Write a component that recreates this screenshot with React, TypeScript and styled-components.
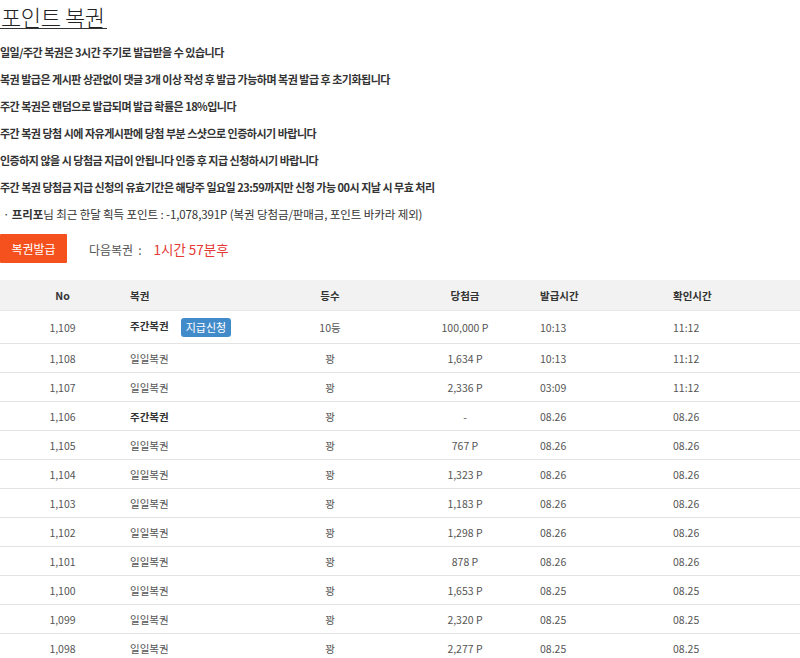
import styled, { createGlobalStyle } from 'styled-components';

const GlobalStyle = createGlobalStyle`
    body {
        margin: 0;
        background: #fff;
        font-family: "Noto Sans CJK KR", "Noto Sans", sans-serif;
        color: #333;
    }
`;

const Page = styled.div`
    width: 800px;
    overflow: hidden;
`;

const Title = styled.h2`
    display: inline-block;
    margin: 0;
    padding: 4px 2px 0 1px;
    font-size: 22px;
    font-weight: 300;
    line-height: 24px;
    letter-spacing: -0.4px;
    color: #222;
    border-bottom: 1px solid #333;
`;

const Notices = styled.ul`
    list-style: none;
    margin: 8px 0 0;
    padding: 0;
`;

const Notice = styled.li<{ $plain?: boolean }>`
    height: 27px;
    line-height: 27px;
    font-size: ${p => (p.$plain ? '11.5px' : '11px')};
    letter-spacing: ${p => (p.$plain ? '-0.1px' : '-0.5px')};
    font-weight: ${p => (p.$plain ? 400 : 700)};
    color: #333;
    white-space: nowrap;
    padding-left: ${p => (p.$plain ? '3px' : '0')};

    b {
        font-weight: 700;
    }
`;

const Actions = styled.div`
    display: flex;
    align-items: center;
    gap: 22px;
    margin-top: 6px;
`;

const IssueButton = styled.button`
    width: 67px;
    height: 29px;
    border: none;
    border-radius: 1px;
    background: #f4511e;
    color: #fff;
    font-family: inherit;
    font-size: 12px;
    padding: 0;
`;

const NextInfo = styled.span`
    font-size: 12px;
    color: #555;
`;

const Colon = styled.span`
    margin: 0 12px 0 5px;
`;

const Countdown = styled.span`
    color: #e53935;
    font-size: 13.5px;
`;

const Table = styled.table`
    width: 800px;
    margin-top: 17px;
    border-collapse: collapse;
    table-layout: fixed;
    font-size: 10.5px;
`;

const Head = styled.th<{ $align?: string; $pad?: number }>`
    height: 30px;
    padding: 0 0 0 ${p => p.$pad ?? 0}px;
    background: #f2f2f2;
    border-bottom: 1px solid #e6e6e6;
    text-align: ${p => p.$align ?? 'center'};
    font-weight: 700;
    color: #333;
`;

const Row = styled.tr<{ $tall?: boolean }>`
    height: ${p => (p.$tall ? 33 : 29)}px;
    border-bottom: 1px solid #e3e3e3;
`;

const Cell = styled.td<{ $align?: string; $pad?: number }>`
    padding: 0 0 0 ${p => p.$pad ?? 0}px;
    text-align: ${p => p.$align ?? 'center'};
    color: #555;
    white-space: nowrap;
`;

const Kind = styled.span<{ $weekly?: boolean }>`
    font-weight: ${p => (p.$weekly ? 700 : 400)};
    color: ${p => (p.$weekly ? '#333' : '#555')};
`;

const ClaimBadge = styled.span`
    display: inline-block;
    margin-left: 12px;
    padding: 0 5px;
    height: 19px;
    line-height: 19px;
    border-radius: 3px;
    background: #428bca;
    color: #fff;
    font-size: 11px;
    vertical-align: middle;
`;

interface Ticket {
    no: string;
    weekly: boolean;
    claim?: boolean;
    rank: string;
    prize: string;
    issued: string;
    checked: string;
}

const tickets: Ticket[] = [
    { no: '1,109', weekly: true, claim: true, rank: '10등', prize: '100,000 P', issued: '10:13', checked: '11:12' },
    { no: '1,108', weekly: false, rank: '꽝', prize: '1,634 P', issued: '10:13', checked: '11:12' },
    { no: '1,107', weekly: false, rank: '꽝', prize: '2,336 P', issued: '03:09', checked: '11:12' },
    { no: '1,106', weekly: true, rank: '꽝', prize: '-', issued: '08.26', checked: '08.26' },
    { no: '1,105', weekly: false, rank: '꽝', prize: '767 P', issued: '08.26', checked: '08.26' },
    { no: '1,104', weekly: false, rank: '꽝', prize: '1,323 P', issued: '08.26', checked: '08.26' },
    { no: '1,103', weekly: false, rank: '꽝', prize: '1,183 P', issued: '08.26', checked: '08.26' },
    { no: '1,102', weekly: false, rank: '꽝', prize: '1,298 P', issued: '08.26', checked: '08.26' },
    { no: '1,101', weekly: false, rank: '꽝', prize: '878 P', issued: '08.26', checked: '08.26' },
    { no: '1,100', weekly: false, rank: '꽝', prize: '1,653 P', issued: '08.25', checked: '08.25' },
    { no: '1,099', weekly: false, rank: '꽝', prize: '2,320 P', issued: '08.25', checked: '08.25' },
    { no: '1,098', weekly: false, rank: '꽝', prize: '2,277 P', issued: '08.25', checked: '08.25' },
];

export default function App() {
    return (
        <Page>
            <GlobalStyle />
            <Title>포인트 복권</Title>
            <Notices>
                <Notice>일일/주간 복권은 3시간 주기로 발급받을 수 있습니다</Notice>
                <Notice>복권 발급은 게시판 상관없이 댓글 3개 이상 작성 후 발급 가능하며 복권 발급 후 초기화됩니다</Notice>
                <Notice>주간 복권은 랜덤으로 발급되며 발급 확률은 18%입니다</Notice>
                <Notice>주간 복권 당첨 시에 자유게시판에 당첨 부분 스샷으로 인증하시기 바랍니다</Notice>
                <Notice>인증하지 않을 시 당첨금 지급이 안됩니다 인증 후 지급 신청하시기 바랍니다</Notice>
                <Notice>주간 복권 당첨금 지급 신청의 유효기간은 해당주 일요일 23:59까지만 신청 가능 00시 지날 시 무효 처리</Notice>
                <Notice $plain>
                    · <b>프리포</b>님 최근 한달 획득 포인트 : -1,078,391P (복권 당첨금/판매금, 포인트 바카라 제외)
                </Notice>
            </Notices>
            <Actions>
                <IssueButton>복권발급</IssueButton>
                <NextInfo>
                    다음복권<Colon>:</Colon><Countdown>1시간 57분후</Countdown>
                </NextInfo>
            </Actions>
            <Table>
                <colgroup>
                    <col style={{ width: 125 }} />
                    <col style={{ width: 135 }} />
                    <col style={{ width: 140 }} />
                    <col style={{ width: 130 }} />
                    <col style={{ width: 133 }} />
                    <col style={{ width: 137 }} />
                </colgroup>
                <thead>
                    <tr>
                        <Head>No</Head>
                        <Head $align="left" $pad={5}>복권</Head>
                        <Head>등수</Head>
                        <Head>당첨금</Head>
                        <Head $align="left" $pad={10}>발급시간</Head>
                        <Head $align="left" $pad={10}>확인시간</Head>
                    </tr>
                </thead>
                <tbody>
                    {tickets.map(t => (
                        <Row key={t.no} $tall={t.claim}>
                            <Cell>{t.no}</Cell>
                            <Cell $align="left" $pad={5}>
                                <Kind $weekly={t.weekly}>{t.weekly ? '주간복권' : '일일복권'}</Kind>
                                {t.claim && <ClaimBadge>지급신청</ClaimBadge>}
                            </Cell>
                            <Cell>{t.rank}</Cell>
                            <Cell>{t.prize}</Cell>
                            <Cell $align="left" $pad={10}>{t.issued}</Cell>
                            <Cell $align="left" $pad={10}>{t.checked}</Cell>
                        </Row>
                    ))}
                </tbody>
            </Table>
        </Page>
    );
}
